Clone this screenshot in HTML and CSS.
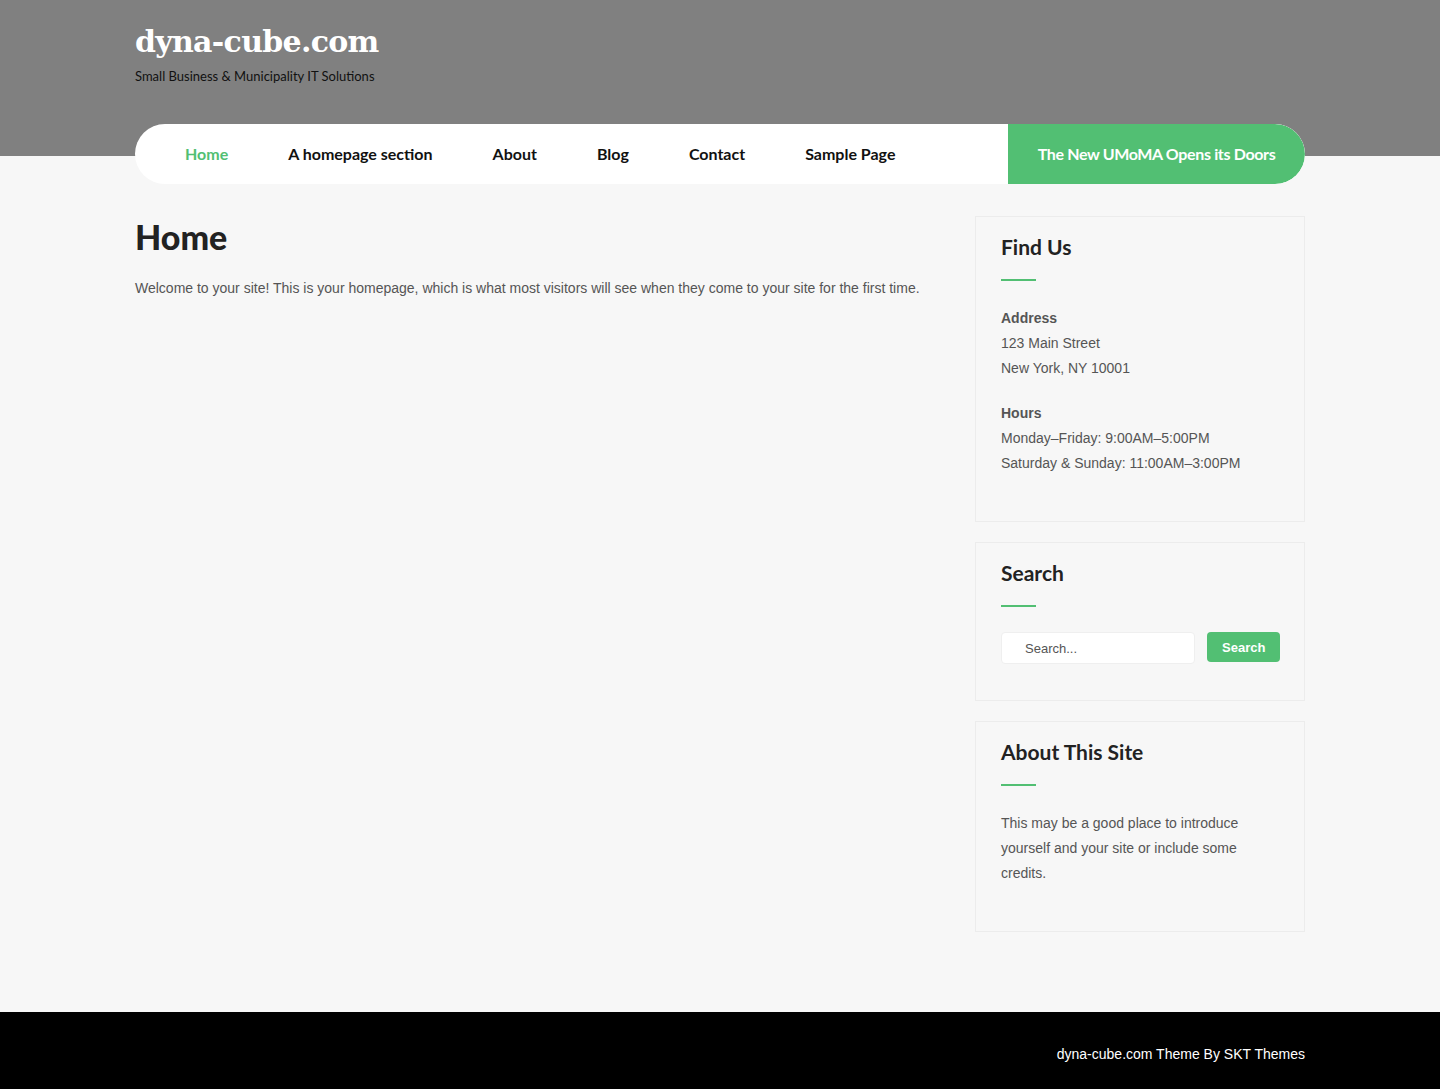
FILE: index.html
```html
<!DOCTYPE html>
<html lang="en">
<head>
    <meta charset="UTF-8">
    <meta name="viewport" content="width=device-width, initial-scale=1.0">
    <title>dyna-cube.com</title>
    <link rel="stylesheet" href="styles.css">
</head>
<body>
    <header class="site-header">
        <div class="wrap">
            <div class="branding">
                <a class="site-title" href="#">dyna-cube.com</a>
                <p class="tagline">Small Business &amp; Municipality IT Solutions</p>
            </div>
            <nav class="main-nav">
                <ul class="menu">
                    <li class="current"><a href="#">Home</a></li>
                    <li><a href="#">A homepage section</a></li>
                    <li><a href="#">About</a></li>
                    <li><a href="#">Blog</a></li>
                    <li><a href="#">Contact</a></li>
                    <li><a href="#">Sample Page</a></li>
                </ul>
                <a class="nav-cta" href="#">The New UMoMA Opens its Doors</a>
            </nav>
        </div>
    </header>

    <div class="wrap content">
        <main class="page">
            <h1 class="page-title">Home</h1>
            <p>Welcome to your site! This is your homepage, which is what most visitors will see when they come to your site for the first time.</p>
        </main>

        <aside class="sidebar">
            <section class="widget">
                <h3 class="widget-title">Find Us</h3>
                <p><strong>Address</strong><br>123 Main Street<br>New York, NY 10001</p>
                <p><strong>Hours</strong><br>Monday&ndash;Friday: 9:00AM&ndash;5:00PM<br>Saturday &amp; Sunday: 11:00AM&ndash;3:00PM</p>
            </section>

            <section class="widget">
                <h3 class="widget-title">Search</h3>
                <form class="search-form" onsubmit="return false">
                    <input type="search" class="search-field" placeholder="Search...">
                    <button type="submit" class="search-submit">Search</button>
                </form>
            </section>

            <section class="widget">
                <h3 class="widget-title">About This Site</h3>
                <p>This may be a good place to introduce yourself and your site or include some credits.</p>
            </section>
        </aside>
    </div>

    <footer class="site-footer">
        <div class="wrap">
            <p>dyna-cube.com Theme By SKT Themes</p>
        </div>
    </footer>
</body>
</html>
```

FILE: styles.css
```css
body {
    margin: 0;
    padding: 0;
    background-color: #f7f7f7;
    font-family: "Liberation Sans", Arial, sans-serif;
    font-size: 14px;
    color: #555;
}

a {
    text-decoration: none;
}

.wrap {
    width: 1170px;
    margin: 0 auto;
}

/* Header: grey band with the nav bar hanging over its lower edge */
.site-header {
    background: linear-gradient(to bottom, #808080 0, #808080 156px, #f7f7f7 156px);
    padding-top: 21px;
}

.branding {
    height: 103px;
}

.site-title {
    display: block;
    font-family: "DejaVu Serif", "Liberation Serif", serif;
    font-weight: bold;
    font-size: 30px;
    letter-spacing: -0.7px;
    line-height: 42px;
    color: #fff;
}

.tagline {
    margin: 5px 0 0;
    font-family: Lato, "Open Sans", sans-serif;
    font-size: 13px;
    color: #111;
}

.main-nav {
    display: flex;
    height: 60px;
    background-color: #fff;
    border-radius: 30px;
    overflow: hidden;
}

.menu {
    flex: 1;
    display: flex;
    align-items: center;
    margin: 0;
    padding: 0 0 2px 50px;
    list-style: none;
    gap: 60px;
}

.menu a {
    font-family: Lato, "Open Sans", sans-serif;
    font-size: 16px;
    font-weight: bold;
    color: #111;
}

.menu .current a {
    color: #52bf73;
}

.nav-cta {
    display: flex;
    align-items: center;
    justify-content: center;
    width: 297px;
    padding-bottom: 2px;
    box-sizing: border-box;
    background-color: #52bf73;
    color: #fff;
    font-family: Lato, "Open Sans", sans-serif;
    font-size: 16px;
    font-weight: bold;
    letter-spacing: -0.35px;
    border-radius: 0 30px 30px 0;
}

/* Content area */
.content {
    display: flex;
    justify-content: space-between;
    padding: 32px 0 80px;
}

.page {
    width: 800px;
}

.page-title {
    margin: 0;
    font-family: Lato, "Open Sans", sans-serif;
    font-size: 34px;
    font-weight: 900;
    line-height: 42px;
    color: #222;
}

.page p {
    margin: 20px 0 0;
    line-height: 20px;
}

.sidebar {
    width: 330px;
    display: flex;
    flex-direction: column;
    gap: 20px;
}

.widget {
    border: 1px solid #ececec;
    padding: 16px 25px 25px;
}

.widget-title {
    margin: 0 0 45px;
    position: relative;
    font-family: Lato, "Open Sans", sans-serif;
    font-size: 21px;
    font-weight: bold;
    line-height: 28px;
    color: #222;
}

.widget-title::after {
    content: "";
    position: absolute;
    left: 0;
    bottom: -20px;
    width: 35px;
    height: 2px;
    background-color: #52bf73;
}

.widget p {
    margin: 0 0 20px;
    line-height: 25px;
}

.widget strong {
    color: #555;
}

.search-form {
    display: flex;
    align-items: flex-start;
    gap: 12px;
    padding-bottom: 11px;
}

.search-field {
    width: 194px;
    height: 32px;
    box-sizing: border-box;
    border: 1px solid #efefef;
    border-radius: 4px;
    padding: 0 0 0 23px;
    background-color: #fff;
    font-family: "Liberation Sans", Arial, sans-serif;
    font-size: 13px;
    color: #555;
}

.search-field::placeholder {
    color: #555;
}

.search-submit {
    height: 30px;
    padding: 0 15px;
    border: none;
    border-radius: 4px;
    background-color: #52bf73;
    color: #fff;
    font-family: "Liberation Sans", Arial, sans-serif;
    font-size: 13px;
    font-weight: bold;
    cursor: pointer;
}

/* Footer */
.site-footer {
    background-color: #000;
    padding: 34px 0 27px;
}

.site-footer p {
    margin: 0;
    text-align: right;
    color: #fff;
    font-size: 14px;
    line-height: 16px;
}
```
